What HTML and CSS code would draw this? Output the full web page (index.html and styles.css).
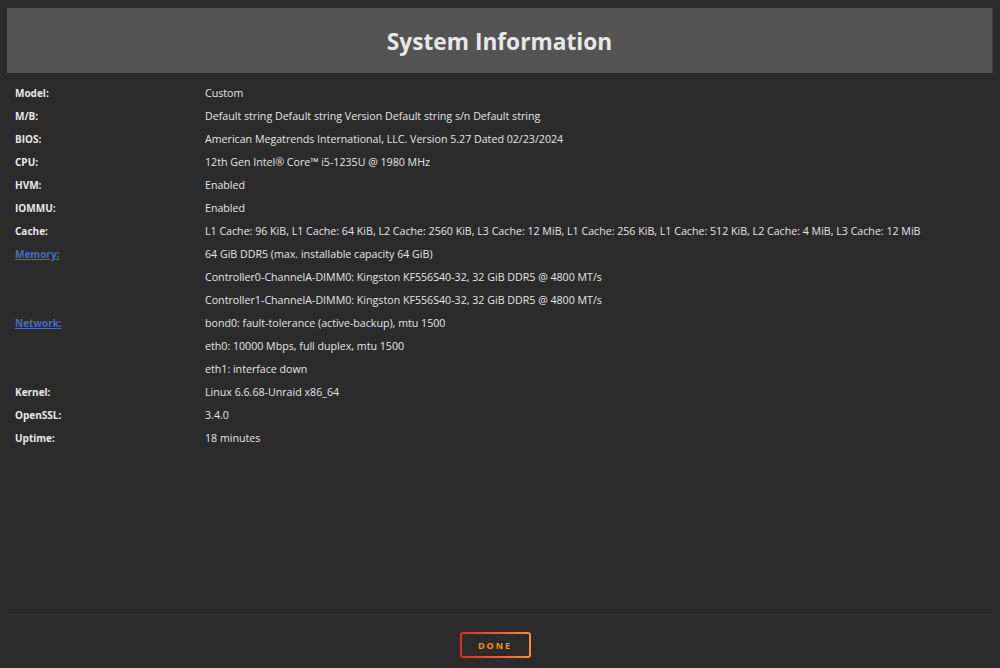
FILE: index.html
```html
<!DOCTYPE html>
<html lang="en">

<head>
  <meta charset="UTF-8">
  <title>System Information</title>
  <link rel="stylesheet" href="styles.css">
</head>

<body>
  <div class="dialog">
    <div class="dialog-title">System Information</div>

    <div class="info-table">
      <div class="label">Model:</div>
      <div class="value">Custom</div>

      <div class="label">M/B:</div>
      <div class="value">Default string Default string Version Default string s/n Default string</div>

      <div class="label">BIOS:</div>
      <div class="value">American Megatrends International, LLC. Version 5.27 Dated 02/23/2024</div>

      <div class="label">CPU:</div>
      <div class="value">12th Gen Intel® Core™ i5-1235U @ 1980 MHz</div>

      <div class="label">HVM:</div>
      <div class="value">Enabled</div>

      <div class="label">IOMMU:</div>
      <div class="value">Enabled</div>

      <div class="label">Cache:</div>
      <div class="value">L1 Cache: 96 KiB, L1 Cache: 64 KiB, L2 Cache: 2560 KiB, L3 Cache: 12 MiB, L1 Cache: 256 KiB, L1 Cache: 512 KiB, L2 Cache: 4 MiB, L3 Cache: 12 MiB</div>

      <div class="label"><a href="#" class="info-link">Memory:</a></div>
      <div class="value">64 GiB DDR5 (max. installable capacity 64 GiB)</div>
      <div class="label"></div>
      <div class="value">Controller0-ChannelA-DIMM0: Kingston KF556S40-32, 32 GiB DDR5 @ 4800 MT/s</div>
      <div class="label"></div>
      <div class="value">Controller1-ChannelA-DIMM0: Kingston KF556S40-32, 32 GiB DDR5 @ 4800 MT/s</div>

      <div class="label"><a href="#" class="info-link">Network:</a></div>
      <div class="value">bond0: fault-tolerance (active-backup), mtu 1500</div>
      <div class="label"></div>
      <div class="value">eth0: 10000 Mbps, full duplex, mtu 1500</div>
      <div class="label"></div>
      <div class="value">eth1: interface down</div>

      <div class="label">Kernel:</div>
      <div class="value">Linux 6.6.68-Unraid x86_64</div>

      <div class="label">OpenSSL:</div>
      <div class="value">3.4.0</div>

      <div class="label">Uptime:</div>
      <div class="value">18 minutes</div>
    </div>

    <div class="dialog-footer">
      <button class="done-btn">Done</button>
    </div>
  </div>
</body>

</html>
```

FILE: styles.css
```css
html,
body {
  height: 100%;
}

body {
  margin: 0;
  font-family: "Open Sans", "Noto Sans", sans-serif;
  background-color: #2b2b2b;
  color: #e5e5e5;
}

.dialog {
  display: flex;
  flex-direction: column;
  height: 100%;
  padding: 8px 7px 0 7px;
  box-sizing: border-box;
}

.dialog-title {
  background: #545454;
  border-right: 1px solid #3e3e3e;
  height: 65px;
  padding-top: 2px;
  box-sizing: border-box;
  display: flex;
  align-items: center;
  justify-content: center;
  font-size: 22.7px;
  font-weight: bold;
  color: #e8e8e8;
}

.info-table {
  display: grid;
  grid-template-columns: 190px 1fr;
  grid-auto-rows: 23px;
  padding: 13px 8px 0 8px;
  font-size: 10.65px;
  flex: 1;
  align-content: start;
}

.label {
  font-weight: 700;
  font-size: 10px;
  color: #e8e8e8;
}

.value {
  color: #e5e5e5;
  white-space: nowrap;
}

.info-link {
  color: #486dba;
}

.dialog-footer {
  border-top: 1px solid #363636;
  margin: 0 1px;
  height: 54px;
  display: flex;
  justify-content: center;
  align-items: flex-start;
  padding-top: 17px;
  box-sizing: border-box;
}

.done-btn {
  width: 71px;
  height: 26px;
  margin-right: 10px;
  background: #2b2b2b;
  border: 2px solid transparent;
  border-radius: 3px;
  background-image: linear-gradient(#2b2b2b, #2b2b2b), linear-gradient(90deg, #e22828, #ff8c2f);
  background-origin: border-box;
  background-clip: padding-box, border-box;
  color: #f2941f;
  font-family: "Open Sans", sans-serif;
  font-size: 9px;
  font-weight: bold;
  letter-spacing: 2px;
  text-transform: uppercase;
  cursor: pointer;
}
```
